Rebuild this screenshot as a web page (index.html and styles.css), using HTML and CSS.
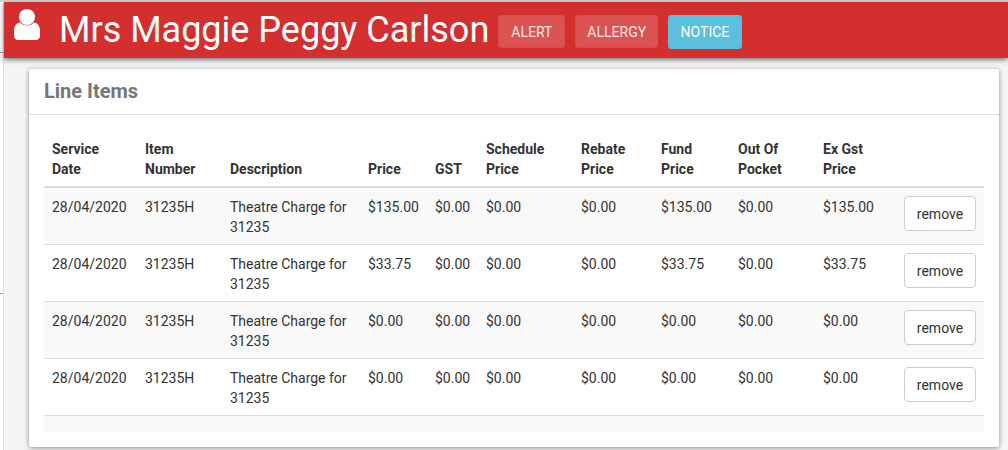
FILE: index.html
```html
<!DOCTYPE html>
<html>

<head>
    <title>Line Items</title>
    <link rel="stylesheet" href="styles.css">
</head>

<body>
    <div class="page">
        <div class="side-rail">
            <div class="rail-item rail-first"></div>
            <div class="rail-item rail-second"></div>
        </div>

        <div class="main">
            <header class="patient-bar">
                <svg class="patient-icon" viewBox="0 0 26 31" width="26" height="31">
                    <circle cx="13" cy="8" r="8" fill="#fff" />
                    <path d="M6 13.500c1.800 1.900 4.200 3 7 3s5.200-1.100 7-3c3.600.3 6 3.800 6 8v5c0 2.500-1.800 4.500-4 4.500H4c-2.200 0-4-2-4-4.500v-5c0-4.200 2.400-7.700 6-8z" fill="#fff" />
                </svg>
                <h1 class="patient-name">Mrs Maggie Peggy Carlson</h1>
                <button class="tag tag-muted tag-alert">ALERT</button>
                <button class="tag tag-muted tag-allergy">ALLERGY</button>
                <button class="tag tag-info">NOTICE</button>
            </header>

            <section class="card">
                <h2 class="card-title">Line Items</h2>
                <div class="card-body">
                    <table class="items-table">
                        <thead>
                            <tr>
                                <th class="col-date">Service Date</th>
                                <th class="col-number">Item Number</th>
                                <th class="col-desc">Description</th>
                                <th class="col-price">Price</th>
                                <th class="col-gst">GST</th>
                                <th class="col-schedule">Schedule Price</th>
                                <th class="col-rebate">Rebate Price</th>
                                <th class="col-fund">Fund Price</th>
                                <th class="col-pocket">Out Of Pocket</th>
                                <th class="col-exgst">Ex Gst Price</th>
                                <th class="col-action"></th>
                            </tr>
                        </thead>
                        <tbody>
                            <tr>
                                <td>28/04/2020</td>
                                <td>31235H</td>
                                <td>Theatre Charge for 31235</td>
                                <td>$135.00</td>
                                <td>$0.00</td>
                                <td>$0.00</td>
                                <td>$0.00</td>
                                <td>$135.00</td>
                                <td>$0.00</td>
                                <td>$135.00</td>
                                <td><button class="remove-button">remove</button></td>
                            </tr>
                            <tr>
                                <td>28/04/2020</td>
                                <td>31235H</td>
                                <td>Theatre Charge for 31235</td>
                                <td>$33.75</td>
                                <td>$0.00</td>
                                <td>$0.00</td>
                                <td>$0.00</td>
                                <td>$33.75</td>
                                <td>$0.00</td>
                                <td>$33.75</td>
                                <td><button class="remove-button">remove</button></td>
                            </tr>
                            <tr>
                                <td>28/04/2020</td>
                                <td>31235H</td>
                                <td>Theatre Charge for 31235</td>
                                <td>$0.00</td>
                                <td>$0.00</td>
                                <td>$0.00</td>
                                <td>$0.00</td>
                                <td>$0.00</td>
                                <td>$0.00</td>
                                <td>$0.00</td>
                                <td><button class="remove-button">remove</button></td>
                            </tr>
                            <tr>
                                <td>28/04/2020</td>
                                <td>31235H</td>
                                <td>Theatre Charge for 31235</td>
                                <td>$0.00</td>
                                <td>$0.00</td>
                                <td>$0.00</td>
                                <td>$0.00</td>
                                <td>$0.00</td>
                                <td>$0.00</td>
                                <td>$0.00</td>
                                <td><button class="remove-button">remove</button></td>
                            </tr>
                            <tr class="empty-row">
                                <td colspan="11"></td>
                            </tr>
                        </tbody>
                    </table>
                </div>
            </section>
        </div>
    </div>
</body>

</html>
```

FILE: styles.css
```css
html,
body {
    margin: 0;
    height: 450px;
    overflow: hidden;
}

body {
    font-family: Roboto, "Liberation Sans", sans-serif;
    font-size: 14px;
    line-height: 20px;
    color: #333;
    background-color: #fff;
}

.page {
    display: flex;
    height: 450px;
    border-top: 2px solid #d4d4d4;
    box-sizing: border-box;
}

.side-rail {
    width: 3px;
    flex: none;
    border-right: 1px solid #ddd;
    box-sizing: content-box;
}

.rail-item {
    border-bottom: 1px solid #999;
}

.rail-first {
    height: 50px;
}

.rail-second {
    height: 240px;
}

.main {
    flex: 1;
    min-width: 0;
    background-color: #f5f5f5;
}

.patient-bar {
    display: flex;
    align-items: flex-start;
    height: 56px;
    background-color: #d32f2f;
    box-shadow: 0 2px 5px rgba(0, 0, 0, 0.5);
    position: relative;
}

.patient-icon {
    margin: 7px 0 0 10px;
    flex: none;
}

.patient-name {
    margin: 7px 9px 0 19px;
    font-size: 36px;
    line-height: 42px;
    font-weight: 400;
    color: #fff;
    white-space: nowrap;
}

.tag {
    height: 33px;
    margin-top: 13px;
    padding: 0 12px;
    border: 1px solid transparent;
    border-radius: 3px;
    font-family: inherit;
    font-size: 14px;
    color: #fff;
}

.tag-muted {
    background-color: #db5353;
    border-color: #d84c4c;
    color: #fbe9e9;
}

.tag-alert {
    margin-right: 10px;
}

.tag-allergy {
    padding: 0 11px;
    margin-right: 10px;
}

.tag-info {
    height: 34px;
    padding: 0 11.500px;
    background-color: #5bc0de;
    border-color: #5bc0de;
}

.card {
    margin: 11px 9px 0 25px;
    height: 378px;
    background-color: #fff;
    border-radius: 2px;
    box-shadow: 0 1px 5px rgba(0, 0, 0, 0.45);
}

.card-title {
    margin: 0;
    height: 45px;
    padding: 0 15px;
    border-bottom: 1px solid #ddd;
    font-size: 20px;
    line-height: 44px;
    font-weight: 700;
    color: #777;
}

.card-body {
    padding: 16px 15px 0;
}

.items-table {
    border-collapse: collapse;
    table-layout: fixed;
    width: 940px;
}

.items-table th,
.items-table td {
    box-sizing: border-box;
    padding: 9px 8px 7px;
    text-align: left;
    vertical-align: top;
    border-top: 1px solid #ddd;
}

.items-table th {
    padding: 8px 8px 7px;
    vertical-align: bottom;
    border-top: 0;
    border-bottom: 2px solid #ddd;
    font-weight: 700;
}

.items-table tbody tr:first-child td {
    border-top: 0;
}

.items-table tbody tr:nth-child(odd) {
    background-color: #f9f9f9;
}

.items-table .empty-row td {
    padding: 0;
    height: 16px;
}

.col-date { width: 93px; }
.col-number { width: 85px; }
.col-desc { width: 138px; }
.col-price { width: 67px; }
.col-gst { width: 51px; }
.col-schedule { width: 95px; }
.col-rebate { width: 80px; }
.col-fund { width: 77px; }
.col-pocket { width: 85px; }
.col-exgst { width: 81px; }
.col-action { width: 88px; }

.remove-button {
    display: block;
    width: 72px;
    height: 35px;
    margin-top: -1px;
    margin-bottom: 1px;
    padding: 0;
    background-color: #fff;
    border: 1px solid #ccc;
    border-radius: 4px;
    font-family: inherit;
    font-size: 14px;
    color: #333;
}
```
